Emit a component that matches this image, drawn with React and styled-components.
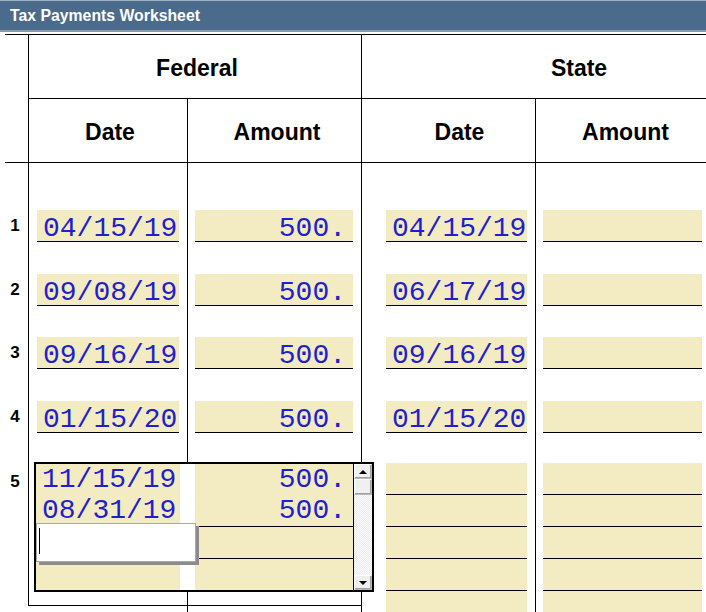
import React from "react";
import styled, { createGlobalStyle } from "styled-components";

const colors = {
  bar: "#4b6b8d",
  barTop: "#9db0c4",
  barBottom: "#8d9aa6",
  field: "#f3ecc3",
  ink: "#1f1fcf",
  line: "#000",
};

const GlobalStyle = createGlobalStyle`
  html, body {
    margin: 0;
    padding: 0;
    background: #fff;
  }
  body {
    font-family: "Liberation Sans", Arial, sans-serif;
    overflow: hidden;
  }
`;

const Page = styled("div")`
  width: 706px;
  height: 612px;
  overflow: hidden;
  background: #fff;
`;

const TitleBar = styled("div")`
  height: 29px;
  border-top: 1px solid ${colors.barTop};
  border-bottom: 2px solid ${colors.barBottom};
  background: ${colors.bar};
  color: #fff;
  font-weight: bold;
  font-size: 15.8px;
  line-height: 29px;
  padding-left: 10px;
`;

const Sheet = styled("div")`
  margin: 2px 0 0 5px;
  border-top: 1px solid ${colors.line};
  display: grid;
  grid-template-columns: 23px 159px 174px 174px 171px;
  grid-template-rows: 64px 64px 79px 63.5px 63.5px 63.5px 173.5px 20px;
`;

const HeadCell = styled("div")`
  box-sizing: border-box;
  grid-row: ${(p) => p.$row};
  grid-column: ${(p) => p.$col};
  border-left: ${(p) => (p.$left ? `1px solid ${colors.line}` : "none")};
  border-bottom: ${(p) => (p.$bottom ? `1px solid ${colors.line}` : "none")};
  display: flex;
  align-items: center;
  justify-content: center;
  padding-top: 4px;
  padding-left: ${(p) => p.$shift || 0}px;
  font-weight: bold;
  font-size: 23px;
  color: #000;
  white-space: nowrap;
`;

const Cell = styled("div")`
  box-sizing: border-box;
  grid-row: ${(p) => p.$row};
  grid-column: ${(p) => p.$col};
  border-left: ${(p) => (p.$left ? `1px solid ${colors.line}` : "none")};
  border-bottom: ${(p) => (p.$bottom ? `1px solid ${colors.line}` : "none")};
  display: flex;
  flex-direction: column;
  justify-content: ${(p) => (p.$top ? "flex-start" : "flex-end")};
  padding-left: ${(p) => p.$inset || 0}px;
  padding-top: ${(p) => p.$pad || 0}px;
  min-height: 0;
`;

const Num = styled("div")`
  height: 32px;
  line-height: 32px;
  padding-right: 3px;
  text-align: center;
  font-weight: bold;
  font-size: 17px;
  color: #000;
`;

const Field = styled("div")`
  width: ${(p) => p.$w}px;
  height: 28px;
  padding: 3px ${(p) => (p.$right ? 7 : 0)}px 0 ${(p) => (p.$right ? 0 : 6)}px;
  box-sizing: content-box;
  flex: none;
  background: ${colors.field};
  border-bottom: 1px solid ${colors.line};
  font-family: "Liberation Mono", "Courier New", monospace;
  font-size: 28px;
  line-height: 31px;
  color: ${colors.ink};
  text-align: ${(p) => (p.$right ? "right" : "left")};
  white-space: nowrap;
`;

const StackField = styled("div")`
  width: ${(p) => p.$w}px;
  height: 31px;
  flex: none;
  background: ${colors.field};
  border-bottom: 1px solid ${colors.line};
`;

/* scrolling list that edits the fifth federal payment */
const ListBox = styled("div")`
  grid-column: 2 / 4;
  grid-row: 7;
  align-self: start;
  justify-self: start;
  position: relative;
  z-index: 2;
  margin: 29.5px 0 0 6px;
  width: 336px;
  height: 126px;
  border: 2px solid ${colors.line};
  background: #fff;
  display: flex;
`;

const ListRows = styled("div")`
  width: 317px;
  display: flex;
  flex-direction: column;
`;

const ListRow = styled("div")`
  height: ${(p) => p.$h}px;
  display: grid;
  grid-template-columns: 144px 15px 158px;
`;

const ListCell = styled("div")`
  box-sizing: border-box;
  background: ${colors.field};
  border-bottom: ${(p) => (p.$last ? "none" : `1px solid ${colors.line}`)};
  padding: 0 ${(p) => (p.$right ? 7 : 0)}px 0 ${(p) => (p.$right ? 0 : 6)}px;
  font-family: "Liberation Mono", "Courier New", monospace;
  font-size: 28px;
  line-height: 31px;
  color: ${colors.ink};
  text-align: ${(p) => (p.$right ? "right" : "left")};
  white-space: nowrap;
`;

const ListGap = styled("div")`
  background: #fff;
`;

const Divider = styled("div")`
  width: 1px;
  background: ${colors.line};
`;

const ScrollBar = styled("div")`
  width: 18px;
  display: flex;
  flex-direction: column;
  background-color: #fbfbfb;
  background-image: linear-gradient(45deg, #ececec 25%, transparent 25%, transparent 75%, #ececec 75%),
    linear-gradient(45deg, #ececec 25%, transparent 25%, transparent 75%, #ececec 75%);
  background-size: 2px 2px;
  background-position: 0 0, 1px 1px;
`;

const ScrollButton = styled("div")`
  box-sizing: border-box;
  height: ${(p) => p.$h}px;
  flex: none;
  background: #f0f0f0;
  border: 1px solid #b9b9b9;
  border-top-color: #fff;
  border-left-color: #fff;
  box-shadow: inset -1px -1px 0 #a0a0a0;
  display: flex;
  align-items: center;
  justify-content: center;
  margin-top: ${(p) => (p.$end ? "auto" : 0)};
`;

const Arrow = styled("span")`
  width: 0;
  height: 0;
  border-left: 4px solid transparent;
  border-right: 4px solid transparent;
  border-bottom: ${(p) => (p.$down ? "none" : "4px solid #000")};
  border-top: ${(p) => (p.$down ? "4px solid #000" : "none")};
`;

/* inline editor opened over the third list entry */
const Editor = styled("div")`
  position: absolute;
  left: 0;
  top: 59px;
  width: 158px;
  height: 37px;
  background: #fff;
  border: 1px solid #a8a8a8;
  box-shadow: 3px 3px 0 #8c8c8c;
`;

const Caret = styled("div")`
  position: absolute;
  left: 2px;
  top: 4px;
  width: 1px;
  height: 26px;
  background: #000;
`;

const payments = [
  { n: 1, fedDate: "04/15/19", fedAmt: "500.", stDate: "04/15/19" },
  { n: 2, fedDate: "09/08/19", fedAmt: "500.", stDate: "06/17/19" },
  { n: 3, fedDate: "09/16/19", fedAmt: "500.", stDate: "09/16/19" },
  { n: 4, fedDate: "01/15/20", fedAmt: "500.", stDate: "01/15/20" },
];

const listRows = [
  { h: 31, date: "11/15/19", amt: "500." },
  { h: 32, date: "08/31/19", amt: "500." },
  { h: 32, date: "", amt: "" },
  { h: 31, date: "", amt: "", last: true },
];

const stack = [0, 1, 2, 3, 4];

function App() {
  return (
    <Page>
      <GlobalStyle />
      <TitleBar>Tax Payments Worksheet</TitleBar>
      <Sheet>
        <HeadCell $row={1} $col={1} />
        <HeadCell $row={1} $col="2 / 4" $left $bottom $shift={4}>
          Federal
        </HeadCell>
        <HeadCell $row={1} $col="4 / 6" $left $bottom $shift={90}>
          State
        </HeadCell>

        <HeadCell $row={2} $col={1} $bottom />
        <HeadCell $row={2} $col={2} $left $bottom $shift={4}>
          Date
        </HeadCell>
        <HeadCell $row={2} $col={3} $left $bottom $shift={5}>
          Amount
        </HeadCell>
        <HeadCell $row={2} $col={4} $left $bottom $shift={22}>
          Date
        </HeadCell>
        <HeadCell $row={2} $col={5} $left $bottom $shift={9}>
          Amount
        </HeadCell>

        {payments.map((p, i) => (
          <React.Fragment key={p.n}>
            <Cell $row={i + 3} $col={1}>
              <Num>{p.n}</Num>
            </Cell>
            <Cell $row={i + 3} $col={2} $left $inset={8}>
              <Field $w={136}>{p.fedDate}</Field>
            </Cell>
            <Cell $row={i + 3} $col={3} $left $inset={7}>
              <Field $w={151} $right>
                {p.fedAmt}
              </Field>
            </Cell>
            <Cell $row={i + 3} $col={4} $left $inset={24}>
              <Field $w={135}>{p.stDate}</Field>
            </Cell>
            <Cell $row={i + 3} $col={5} $left $inset={7}>
              <Field $w={152} $right />
            </Cell>
          </React.Fragment>
        ))}

        <Cell $row={7} $col={1} $top $pad={33.5}>
          <Num>5</Num>
        </Cell>
        <Cell $row={7} $col={2} $left $bottom />
        <Cell $row={7} $col={3} $left $bottom />
        <Cell $row="7 / 9" $col={4} $left $top $inset={24} $pad={30.5}>
          {stack.map((i) => (
            <StackField key={i} $w={141} />
          ))}
        </Cell>
        <Cell $row="7 / 9" $col={5} $left $top $inset={7} $pad={30.5}>
          {stack.map((i) => (
            <StackField key={i} $w={159} />
          ))}
        </Cell>

        <ListBox>
          <ListRows>
            {listRows.map((r, i) => (
              <ListRow key={i} $h={r.h}>
                <ListCell $last={r.last}>{r.date}</ListCell>
                <ListGap />
                <ListCell $last={r.last} $right>
                  {r.amt}
                </ListCell>
              </ListRow>
            ))}
          </ListRows>
          <Divider />
          <ScrollBar>
            <ScrollButton $h={15}>
              <Arrow />
            </ScrollButton>
            <ScrollButton $h={16} />
            <ScrollButton $h={15} $end>
              <Arrow $down />
            </ScrollButton>
          </ScrollBar>
          <Editor>
            <Caret />
          </Editor>
        </ListBox>

        <Cell $row={8} $col={1} />
        <Cell $row={8} $col={2} />
        <Cell $row={8} $col={3} $left />
      </Sheet>
    </Page>
  );
}

export default App;
